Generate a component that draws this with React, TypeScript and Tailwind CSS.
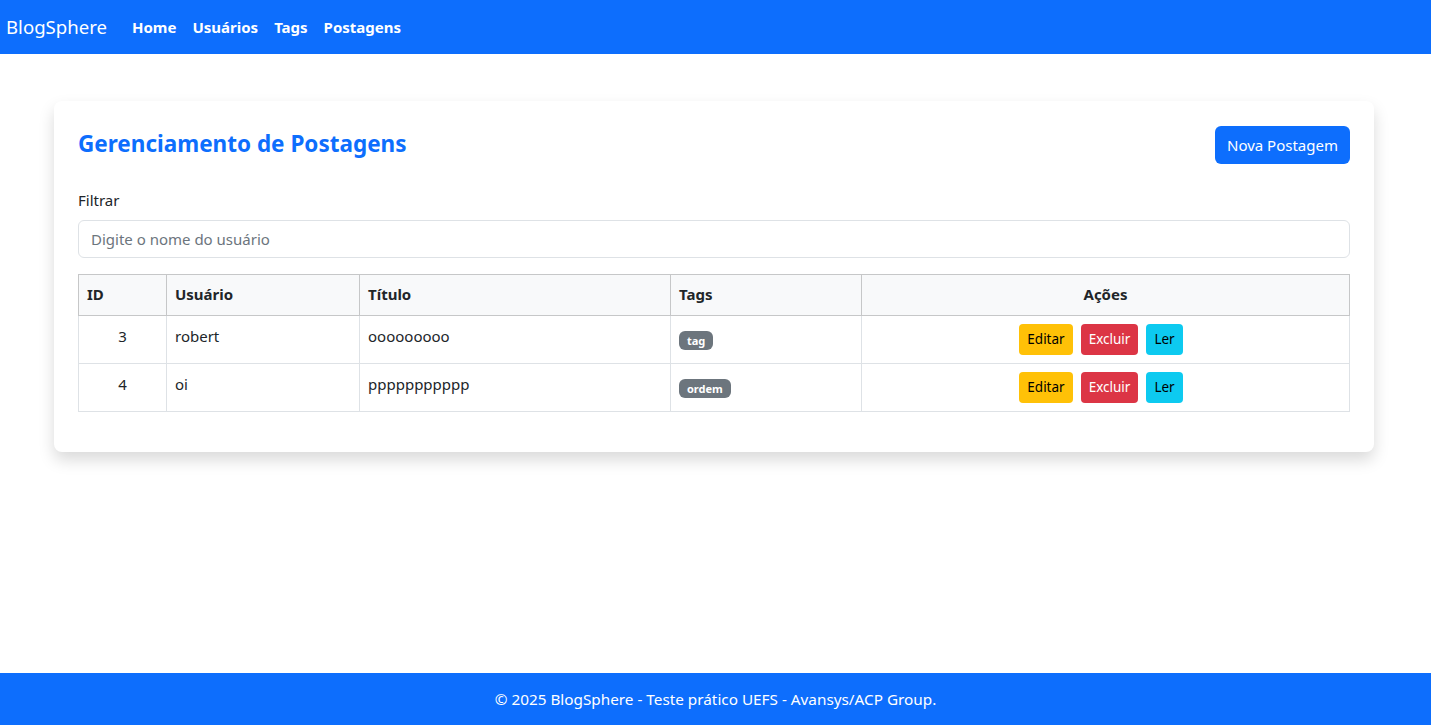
import { useState } from 'react'

interface Post {
  id: number
  user: string
  title: string
  tags: string[]
}

const posts: Post[] = [
  { id: 3, user: 'robert', title: 'ooooooooo', tags: ['tag'] },
  { id: 4, user: 'oi', title: 'ppppppppppp', tags: ['ordem'] },
]

export default function App() {
  const [filter, setFilter] = useState('')

  const visible = posts.filter((p) => p.user.toLowerCase().includes(filter.toLowerCase()))

  return (
    <div className="min-h-screen flex flex-col bg-white text-[#212529] font-['Noto_Sans',sans-serif]">
      <nav className="h-[54px] bg-[#0d6efd] flex items-center px-[6px]">
        <span className="text-white text-[18.6px] mr-[25px]">BlogSphere</span>
        <div className="flex gap-[16px] text-white font-bold text-[15px]">
          <a href="#">Home</a>
          <a href="#">Usuários</a>
          <a href="#">Tags</a>
          <a href="#">Postagens</a>
        </div>
      </nav>

      <main className="flex-1 pl-[54px] pr-[57px]">
        <div className="mt-[47px] bg-white rounded-[8px] shadow-[0_8px_16px_rgba(0,0,0,0.15)] px-[24px] pt-[25px] pb-[40px]">
          <div className="flex justify-between items-start">
            <h1 className="text-[#0d6efd] font-bold text-[22.5px] mt-[1px]">Gerenciamento de Postagens</h1>
            <button className="bg-[#0d6efd] text-white rounded-[6px] h-[38px] px-[12px] text-[15px]">
              Nova Postagem
            </button>
          </div>

          <label className="block mt-[25px] mb-[8px] text-[15px]">Filtrar</label>
          <input
            value={filter}
            onChange={(e) => setFilter(e.target.value)}
            placeholder="Digite o nome do usuário"
            className="w-full h-[38px] border border-[#dee2e6] rounded-[6px] px-[12px] text-[15px] placeholder:text-[#6c757d] outline-none"
          />

          <table className="w-full mt-[16px] border-collapse text-[15px]">
            <thead>
              <tr className="bg-[#f8f9fa] h-[41px]">
                <th className="border border-[#c6c7c8] text-left px-[8px] w-[88px]">ID</th>
                <th className="border border-[#c6c7c8] text-left px-[8px] w-[193px]">Usuário</th>
                <th className="border border-[#c6c7c8] text-left px-[8px] w-[311px]">Título</th>
                <th className="border border-[#c6c7c8] text-left px-[8px] w-[191px]">Tags</th>
                <th className="border border-[#c6c7c8] text-center px-[8px]">Ações</th>
              </tr>
            </thead>
            <tbody>
              {visible.map((p) => (
                <tr key={p.id} className="h-[48px]">
                  <td className="border border-[#dee2e6] px-[8px] align-top pt-[9px] text-center">{p.id}</td>
                  <td className="border border-[#dee2e6] px-[8px] align-top pt-[9px]">{p.user}</td>
                  <td className="border border-[#dee2e6] px-[8px] align-top pt-[9px]">{p.title}</td>
                  <td className="border border-[#dee2e6] px-[8px] align-top pt-[12px]">
                    {p.tags.map((t) => (
                      <span
                        key={t}
                        className="inline-block bg-[#6c757d] text-white text-[11px] font-bold rounded-[6px] px-[8px] leading-[19px]"
                      >
                        {t}
                      </span>
                    ))}
                  </td>
                  <td className="border border-[#dee2e6] px-[8px] pr-[17px]">
                    <div className="flex justify-center gap-[8px]">
                      <button className="bg-[#ffc107] text-black text-[13.5px] rounded-[4px] h-[31px] px-[8px]">Editar</button>
                      <button className="bg-[#dc3545] text-white text-[13.5px] rounded-[4px] h-[31px] px-[8px]">Excluir</button>
                      <button className="bg-[#0dcaf0] text-black text-[13.5px] rounded-[4px] h-[31px] px-[8px]">Ler</button>
                    </div>
                  </td>
                </tr>
              ))}
            </tbody>
          </table>
        </div>
      </main>

      <footer className="h-[52px] bg-[#0d6efd] text-white flex items-center justify-center text-[15.3px]">
        © 2025 BlogSphere - Teste prático UEFS - Avansys/ACP Group.
      </footer>
    </div>
  )
}
